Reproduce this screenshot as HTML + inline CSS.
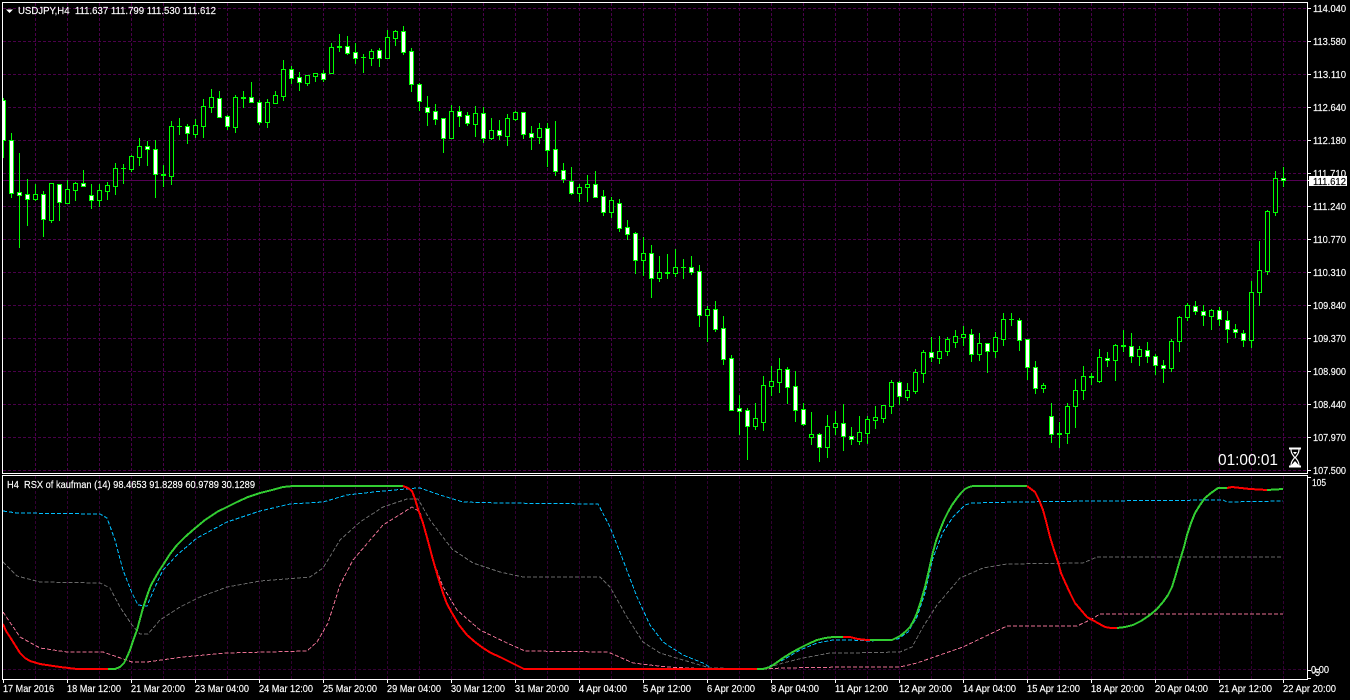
<!DOCTYPE html>
<html lang="en">
<head>
<meta charset="utf-8">
<title>USDJPY,H4</title>
<style>
html,body{margin:0;padding:0;background:#000;width:1350px;height:700px;overflow:hidden}
svg{display:block}
text{font-family:"Liberation Sans",sans-serif;font-size:10px;fill:#fff;stroke:#fff;stroke-width:.15;white-space:pre}
</style>
</head>
<body>
<svg width="1350" height="700" viewBox="0 0 1350 700" xmlns="http://www.w3.org/2000/svg">
<defs>
<clipPath id="main"><rect x="3" y="3" width="1304" height="470"/></clipPath>
</defs>
<rect width="1350" height="700" fill="#000"/>

<!-- grid main -->
<g shape-rendering="crispEdges" fill="none" stroke="#4a004a" stroke-width="1" stroke-dasharray="3 2">
<path d="M3 8.5H1307M3 41.5H1307M3 74.5H1307M3 107.5H1307M3 140.5H1307M3 173.5H1307M3 206.5H1307M3 239.5H1307M3 272.5H1307M3 305.5H1307M3 338.5H1307M3 371.5H1307M3 404.5H1307M3 437.5H1307M3 470.5H1307"/>
<path d="M35.5 3V473M67.5 3V473M99.5 3V473M131.5 3V473M163.5 3V473M195.5 3V473M227.5 3V473M259.5 3V473M291.5 3V473M323.5 3V473M355.5 3V473M387.5 3V473M419.5 3V473M451.5 3V473M483.5 3V473M515.5 3V473M547.5 3V473M579.5 3V473M611.5 3V473M643.5 3V473M675.5 3V473M707.5 3V473M739.5 3V473M771.5 3V473M803.5 3V473M835.5 3V473M867.5 3V473M899.5 3V473M931.5 3V473M963.5 3V473M995.5 3V473M1027.5 3V473M1059.5 3V473M1091.5 3V473M1123.5 3V473M1155.5 3V473M1187.5 3V473M1219.5 3V473M1251.5 3V473M1283.5 3V473"/>
<path stroke="#330033" d="M3 669.5H1307"/>
<path stroke="#330033" d="M35.5 476V679M67.5 476V679M99.5 476V679M131.5 476V679M163.5 476V679M195.5 476V679M227.5 476V679M259.5 476V679M291.5 476V679M323.5 476V679M355.5 476V679M387.5 476V679M419.5 476V679M451.5 476V679M483.5 476V679M515.5 476V679M547.5 476V679M579.5 476V679M611.5 476V679M643.5 476V679M675.5 476V679M707.5 476V679M739.5 476V679M771.5 476V679M803.5 476V679M835.5 476V679M867.5 476V679M899.5 476V679M931.5 476V679M963.5 476V679M995.5 476V679M1027.5 476V679M1059.5 476V679M1091.5 476V679M1123.5 476V679M1155.5 476V679M1187.5 476V679M1219.5 476V679M1251.5 476V679M1283.5 476V679"/>
</g>
<path d="M3 180.5H1307" stroke="#550055" stroke-width="1" shape-rendering="crispEdges"/>

<!-- candles -->
<g clip-path="url(#main)" shape-rendering="crispEdges" stroke="#00ff00" stroke-width="1">
<path fill="none" d="M3.5 98V158M11.5 133V198M19.5 153V248M27.5 179V226M35.5 184V201M43.5 191V237M51.5 183V223M59.5 184V221M67.5 180V204M75.5 182V201M83.5 170V186M91.5 184V209M99.5 184V207M107.5 182V200M115.5 163V195M123.5 164V184M131.5 155V172M139.5 138V166M147.5 141V166M155.5 140V198M163.5 165V187M171.5 121V185M179.5 118V135M187.5 124V144M195.5 119V138M203.5 99V138M211.5 89V113M219.5 91V117M227.5 115V130M235.5 95V133M243.5 91V108M251.5 82V102M259.5 100V125M267.5 99V128M275.5 91V104M283.5 60V101M291.5 66V84M299.5 72V91M307.5 75V86M315.5 73V82M323.5 70V82M331.5 43V73M339.5 34V52M347.5 36V55M355.5 43V64M363.5 54V73M371.5 49V66M379.5 48V67M387.5 30V59M395.5 30V46M403.5 26V55M411.5 48V92M419.5 83V111M427.5 96V126M435.5 104V125M443.5 118V153M451.5 105V139M459.5 106V127M467.5 112V126M475.5 106V137M483.5 107V143M491.5 118V140M499.5 120V140M507.5 114V146M515.5 111V121M523.5 112V139M531.5 126V150M539.5 123V144M547.5 123V167M555.5 121V176M563.5 163V183M571.5 167V195M579.5 184V202M587.5 175V202M595.5 171V198M603.5 190V216M611.5 197V218M619.5 199V232M627.5 220V240M635.5 232V274M643.5 237V276M651.5 245V298M659.5 256V282M667.5 254V279M675.5 249V277M683.5 259V279M691.5 256V275M699.5 265V327M707.5 306V342M715.5 301V332M723.5 316V365M731.5 355V410M739.5 395V435M747.5 408V460M755.5 403V430M763.5 376V431M771.5 366V396M779.5 358V393M787.5 367V404M795.5 371V422M803.5 403V426M811.5 412V445M819.5 433V462M827.5 415V458M835.5 411V435M843.5 404V451M851.5 427V445M859.5 416V445M867.5 416V444M875.5 406V429M883.5 405V423M891.5 380V414M899.5 381V405M907.5 383V401M915.5 369V394M923.5 350V383M931.5 337V362M939.5 336V364M947.5 337V356M955.5 330V348M963.5 326V346M971.5 329V362M979.5 333V361M987.5 343V373M995.5 332V358M1003.5 313V346M1011.5 313V326M1019.5 318V351M1027.5 339V380M1035.5 361V394M1043.5 383V393M1051.5 403V443M1059.5 422V448M1067.5 403V444M1075.5 379V428M1083.5 366V400M1091.5 373V385M1099.5 349V383M1107.5 352V367M1115.5 344V381M1123.5 330V352M1131.5 333V363M1139.5 346V366M1147.5 342V363M1155.5 354V375M1163.5 360V383M1171.5 339V372M1179.5 316V352M1187.5 303V321M1195.5 301V315M1203.5 305V326M1211.5 309V330M1219.5 307V326M1227.5 311V343M1235.5 324V338M1243.5 330V347M1251.5 281V348M1259.5 241V306M1267.5 210V275M1275.5 171V216M1283.5 167V187M121 168.5h5M177 126.5h5M361 57.5h5M681 267.5h5M1009 319.5h5"/>
<path fill="#000" d="M33.5 194.5h4v5h-4zM49.5 183.5h4v37h-4zM65.5 189.5h4v14h-4zM73.5 183.5h4v7h-4zM97.5 190.5h4v10h-4zM105.5 185.5h4v6h-4zM113.5 168.5h4v18h-4zM129.5 156.5h4v13h-4zM137.5 146.5h4v11h-4zM161.5 174.5h4v1h-4zM169.5 126.5h4v50h-4zM193.5 125.5h4v9h-4zM201.5 106.5h4v20h-4zM209.5 97.5h4v10h-4zM233.5 97.5h4v30h-4zM241.5 97.5h4v1h-4zM265.5 102.5h4v20h-4zM273.5 95.5h4v8h-4zM281.5 69.5h4v27h-4zM305.5 75.5h4v8h-4zM313.5 73.5h4v3h-4zM329.5 47.5h4v26h-4zM337.5 46.5h4v1h-4zM369.5 51.5h4v7h-4zM385.5 37.5h4v21h-4zM393.5 31.5h4v7h-4zM449.5 111.5h4v27h-4zM473.5 113.5h4v11h-4zM489.5 130.5h4v8h-4zM505.5 118.5h4v18h-4zM513.5 112.5h4v7h-4zM537.5 128.5h4v9h-4zM577.5 187.5h4v6h-4zM585.5 184.5h4v3h-4zM609.5 200.5h4v12h-4zM641.5 253.5h4v7h-4zM657.5 272.5h4v6h-4zM665.5 272.5h4v1h-4zM673.5 267.5h4v6h-4zM705.5 309.5h4v6h-4zM753.5 418.5h4v8h-4zM761.5 385.5h4v37h-4zM769.5 381.5h4v5h-4zM777.5 369.5h4v13h-4zM809.5 434.5h4v3h-4zM825.5 426.5h4v21h-4zM833.5 423.5h4v4h-4zM857.5 432.5h4v9h-4zM865.5 419.5h4v14h-4zM873.5 417.5h4v3h-4zM881.5 405.5h4v13h-4zM889.5 382.5h4v24h-4zM905.5 390.5h4v7h-4zM913.5 372.5h4v19h-4zM921.5 352.5h4v21h-4zM937.5 351.5h4v7h-4zM945.5 339.5h4v12h-4zM953.5 336.5h4v6h-4zM961.5 334.5h4v3h-4zM977.5 343.5h4v11h-4zM993.5 337.5h4v14h-4zM1001.5 319.5h4v20h-4zM1041.5 385.5h4v3h-4zM1057.5 433.5h4v1h-4zM1065.5 406.5h4v27h-4zM1073.5 390.5h4v16h-4zM1081.5 376.5h4v14h-4zM1089.5 376.5h4v1h-4zM1097.5 357.5h4v24h-4zM1113.5 345.5h4v15h-4zM1121.5 345.5h4v1h-4zM1137.5 349.5h4v7h-4zM1169.5 341.5h4v27h-4zM1177.5 317.5h4v24h-4zM1185.5 305.5h4v12h-4zM1209.5 310.5h4v6h-4zM1249.5 292.5h4v48h-4zM1257.5 270.5h4v22h-4zM1265.5 211.5h4v60h-4zM1273.5 178.5h4v34h-4z"/>
<path fill="#fff" d="M1.5 100.5h4v40h-4zM9.5 140.5h4v53h-4zM17.5 192.5h4v3h-4zM25.5 194.5h4v5h-4zM41.5 194.5h4v25h-4zM57.5 184.5h4v18h-4zM81.5 183.5h4v3h-4zM89.5 195.5h4v5h-4zM145.5 146.5h4v3h-4zM153.5 149.5h4v25h-4zM185.5 126.5h4v7h-4zM217.5 98.5h4v19h-4zM225.5 116.5h4v10h-4zM249.5 97.5h4v5h-4zM257.5 102.5h4v20h-4zM289.5 69.5h4v9h-4zM297.5 77.5h4v5h-4zM321.5 73.5h4v6h-4zM345.5 46.5h4v7h-4zM353.5 52.5h4v6h-4zM377.5 50.5h4v8h-4zM401.5 31.5h4v21h-4zM409.5 51.5h4v33h-4zM417.5 84.5h4v17h-4zM425.5 107.5h4v5h-4zM433.5 111.5h4v8h-4zM441.5 118.5h4v20h-4zM457.5 111.5h4v5h-4zM465.5 115.5h4v8h-4zM481.5 113.5h4v25h-4zM497.5 130.5h4v5h-4zM521.5 112.5h4v22h-4zM529.5 133.5h4v4h-4zM545.5 128.5h4v22h-4zM553.5 149.5h4v22h-4zM561.5 170.5h4v9h-4zM569.5 181.5h4v12h-4zM593.5 184.5h4v13h-4zM601.5 196.5h4v16h-4zM617.5 203.5h4v25h-4zM625.5 227.5h4v7h-4zM633.5 233.5h4v27h-4zM649.5 253.5h4v25h-4zM689.5 267.5h4v5h-4zM697.5 271.5h4v44h-4zM713.5 309.5h4v20h-4zM721.5 328.5h4v31h-4zM729.5 358.5h4v52h-4zM737.5 408.5h4v3h-4zM745.5 410.5h4v16h-4zM785.5 369.5h4v18h-4zM793.5 386.5h4v24h-4zM801.5 409.5h4v15h-4zM817.5 434.5h4v13h-4zM841.5 423.5h4v13h-4zM849.5 436.5h4v3h-4zM897.5 382.5h4v14h-4zM929.5 352.5h4v5h-4zM969.5 334.5h4v20h-4zM985.5 343.5h4v8h-4zM1017.5 320.5h4v20h-4zM1025.5 339.5h4v28h-4zM1033.5 367.5h4v21h-4zM1049.5 416.5h4v18h-4zM1105.5 358.5h4v2h-4zM1129.5 346.5h4v10h-4zM1145.5 350.5h4v6h-4zM1153.5 356.5h4v9h-4zM1161.5 365.5h4v3h-4zM1193.5 306.5h4v5h-4zM1201.5 311.5h4v4h-4zM1217.5 310.5h4v9h-4zM1225.5 320.5h4v9h-4zM1233.5 329.5h4v3h-4zM1241.5 333.5h4v7h-4zM1281.5 178.5h4v2h-4z"/>
</g>

<!-- indicator dashed lines -->
<g fill="none" stroke-width="1" stroke-dasharray="4 2" shape-rendering="crispEdges">
<polyline stroke="#00bfff" points="3,511 17,513 100,514 107,518 115,540 123,570 132,593 138,605 147,606 155,587 163,570 177,555 197,538 227,522 260,511 290,504 323,502 347,495 383,491 417,488 420,488 440,495 463,502 500,503 598,504 610,527 623,560 637,597 650,625 663,642 683,655 703,663 713,669 763,669 783,660 800,650 817,643 833,640 850,640 870,641 898,639 908,632 917,617 925,593 933,558 943,532 953,517 965,505 972,503 1017,502 1093,501 1223,500 1227,502 1283,501"/>
<polyline stroke="#696969" points="3,562 17,576 40,582 100,583 110,588 120,607 132,625 140,634 148,634 160,620 180,607 200,597 227,587 260,581 310,577 323,568 340,540 360,522 383,507 407,499 418,499 430,520 452,549 473,563 500,572 523,577 600,577 610,587 627,617 643,642 660,653 683,660 710,668 763,669 783,663 803,658 830,653 850,653 900,652 912,647 923,627 937,605 960,578 983,568 1007,564 1083,563 1097,557 1283,557"/>
<polyline stroke="#e97092" points="3,612 20,637 40,648 67,652 103,652 132,662 147,662 183,657 227,653 307,651 317,642 328,623 340,585 353,560 383,525 412,507 420,512 433,560 443,587 457,610 480,630 507,643 525,651 608,652 633,663 667,667 710,669 763,669 783,668 847,667 900,667 917,663 937,656 963,647 1007,626 1077,626 1090,620 1100,614 1283,614"/>
</g>

<!-- RSX main line -->
<g fill="none" stroke-width="2" stroke-linejoin="round" shape-rendering="crispEdges">
<polyline stroke="#ff0000" points="3,624 6,631 10,637 15,645 20,653 25,658 30,661 40,664 60,667 77,669 108,669"/>
<polyline stroke="#32cd32" points="108,669 115,669 120,667 124,663 127,657 130,650 133,641 137,630 140,619 143,608 148,593 151,585 155,578 159,571 163,565 170,554 177,545 185,537 193,530 205,520 217,512 227,507 237,502 248,497 260,493 272,490 283,487 293,486 403,486"/>
<polyline stroke="#ff0000" points="403,486 408,488 412,491 415,499 418,509 423,523 428,541 433,560 438,577 443,593 447,604 452,613 459,625 467,635 475,642 483,648 491,653 500,657 512,663 524,669 757,669"/>
<polyline stroke="#32cd32" points="757,669 763,669 770,667 776,663 783,658 791,653 800,648 808,644 817,640 825,638 833,637 843,637"/>
<polyline stroke="#ff0000" points="843,637 850,637 858,639 867,640 870,640"/>
<polyline stroke="#32cd32" points="870,640 892,640 896,638 900,636 905,632 910,627 914,620 917,613 921,601 925,587 929,570 933,552 936,541 940,530 944,520 948,512 952,505 957,498 961,493 965,489 969,487 973,486 1027,486"/>
<polyline stroke="#ff0000" points="1027,486 1031,489 1035,492 1039,500 1043,510 1046,521 1050,537 1054,550 1058,562 1061,573 1065,582 1070,593 1075,603 1081,610 1087,617 1096,622 1105,627 1111,628 1117,628"/>
<polyline stroke="#32cd32" points="1117,628 1125,627 1133,625 1141,621 1150,615 1157,609 1163,602 1168,595 1172,587 1176,574 1180,560 1184,547 1187,535 1191,523 1195,513 1200,505 1205,498 1211,493 1218,488 1227,488"/>
<polyline stroke="#ff0000" points="1227,488 1232,487 1250,489 1267,490"/>
<polyline stroke="#32cd32" points="1267,490 1283,489"/>
</g>

<!-- frames and ticks -->
<g shape-rendering="crispEdges" fill="none" stroke="#fff" stroke-width="1">
<path d="M2.5 2.5H1307.5V473.5H2.5Z"/>
<path d="M2.5 475.5H1307.5V679.5H2.5Z"/>
<path d="M1308 8.5h3M1308 41.5h3M1308 74.5h3M1308 107.5h3M1308 140.5h3M1308 173.5h3M1308 206.5h3M1308 239.5h3M1308 272.5h3M1308 305.5h3M1308 338.5h3M1308 371.5h3M1308 404.5h3M1308 437.5h3M1308 470.5h3"/>
<path d="M1308 477.5h3M1308 670.5h3M1308 678.5h3"/>
<path d="M3.5 680v3M67.5 680v3M131.5 680v3M195.5 680v3M259.5 680v3M323.5 680v3M387.5 680v3M451.5 680v3M515.5 680v3M579.5 680v3M643.5 680v3M707.5 680v3M771.5 680v3M835.5 680v3M899.5 680v3M963.5 680v3M1027.5 680v3M1091.5 680v3M1155.5 680v3M1219.5 680v3M1283.5 680v3"/>
</g>

<!-- header -->
<path d="M6 9.5h7l-3.5 3.5z" fill="#fff"/>
<text x="18" y="14" textLength="198" lengthAdjust="spacingAndGlyphs" xml:space="preserve">USDJPY,H4  111.637 111.799 111.530 111.612</text>
<text x="7" y="488" textLength="248" lengthAdjust="spacingAndGlyphs" xml:space="preserve">H4  RSX of kaufman (14) 98.4653 91.8289 60.9789 30.1289</text>

<!-- price axis -->
<g>
<text x="1313" y="12" textLength="33" lengthAdjust="spacingAndGlyphs">114.040</text>
<text x="1313" y="45" textLength="33" lengthAdjust="spacingAndGlyphs">113.580</text>
<text x="1313" y="78" textLength="33" lengthAdjust="spacingAndGlyphs">113.110</text>
<text x="1313" y="111" textLength="33" lengthAdjust="spacingAndGlyphs">112.640</text>
<text x="1313" y="144" textLength="33" lengthAdjust="spacingAndGlyphs">112.180</text>
<text x="1313" y="177" textLength="33" lengthAdjust="spacingAndGlyphs">111.710</text>
<text x="1313" y="210" textLength="33" lengthAdjust="spacingAndGlyphs">111.240</text>
<text x="1313" y="243" textLength="33" lengthAdjust="spacingAndGlyphs">110.770</text>
<text x="1313" y="276" textLength="33" lengthAdjust="spacingAndGlyphs">110.310</text>
<text x="1313" y="309" textLength="33" lengthAdjust="spacingAndGlyphs">109.840</text>
<text x="1313" y="342" textLength="33" lengthAdjust="spacingAndGlyphs">109.370</text>
<text x="1313" y="375" textLength="33" lengthAdjust="spacingAndGlyphs">108.900</text>
<text x="1313" y="408" textLength="33" lengthAdjust="spacingAndGlyphs">108.440</text>
<text x="1313" y="441" textLength="33" lengthAdjust="spacingAndGlyphs">107.970</text>
<text x="1313" y="474" textLength="33" lengthAdjust="spacingAndGlyphs">107.500</text>
</g>
<rect x="1309" y="176" width="38" height="10" fill="#fff" shape-rendering="crispEdges"/>
<path d="M1307 180.5h2" stroke="#fff" shape-rendering="crispEdges"/>
<text x="1313" y="185" textLength="33" lengthAdjust="spacingAndGlyphs" style="fill:#000;stroke:#000">111.612</text>

<!-- indicator axis -->
<text x="1312" y="486" textLength="14" lengthAdjust="spacingAndGlyphs">105</text>
<text x="1311" y="673" textLength="18" lengthAdjust="spacingAndGlyphs">0.00</text>
<text x="1312" y="676" textLength="8" lengthAdjust="spacingAndGlyphs">-5</text>

<!-- countdown -->
<text x="1218" y="465" textLength="60" lengthAdjust="spacingAndGlyphs" style="font-size:16px;stroke-width:0">01:00:01</text>
<g>
<path d="M1289 448.5h12M1289 466.5h12" stroke="#fff" stroke-width="1.6" fill="none" shape-rendering="crispEdges"/>
<path d="M1291 449.5c0 5 3 6 3.500 8c-.5 2-3.500 3-3.500 8M1299 449.500c0 5-3 6-3.500 8c.5 2 3.500 3 3.500 8" stroke="#fff" stroke-width="1.200" fill="none"/>
<path d="M1291 465.500l4-4.500l4 4.500z" fill="#fff"/>
<path d="M1293 452h4l-2 2.500z" fill="#fff"/>
</g>

<!-- time axis -->
<g>
<text x="3" y="692" textLength="51" lengthAdjust="spacingAndGlyphs">17 Mar 2016</text>
<text x="67" y="692" textLength="54" lengthAdjust="spacingAndGlyphs">18 Mar 12:00</text>
<text x="131" y="692" textLength="54" lengthAdjust="spacingAndGlyphs">21 Mar 20:00</text>
<text x="195" y="692" textLength="54" lengthAdjust="spacingAndGlyphs">23 Mar 04:00</text>
<text x="259" y="692" textLength="54" lengthAdjust="spacingAndGlyphs">24 Mar 12:00</text>
<text x="323" y="692" textLength="54" lengthAdjust="spacingAndGlyphs">25 Mar 20:00</text>
<text x="387" y="692" textLength="54" lengthAdjust="spacingAndGlyphs">29 Mar 04:00</text>
<text x="451" y="692" textLength="54" lengthAdjust="spacingAndGlyphs">30 Mar 12:00</text>
<text x="515" y="692" textLength="54" lengthAdjust="spacingAndGlyphs">31 Mar 20:00</text>
<text x="579" y="692" textLength="48" lengthAdjust="spacingAndGlyphs">4 Apr 04:00</text>
<text x="643" y="692" textLength="48" lengthAdjust="spacingAndGlyphs">5 Apr 12:00</text>
<text x="707" y="692" textLength="48" lengthAdjust="spacingAndGlyphs">6 Apr 20:00</text>
<text x="771" y="692" textLength="48" lengthAdjust="spacingAndGlyphs">8 Apr 04:00</text>
<text x="835" y="692" textLength="53" lengthAdjust="spacingAndGlyphs">11 Apr 12:00</text>
<text x="899" y="692" textLength="53" lengthAdjust="spacingAndGlyphs">12 Apr 20:00</text>
<text x="963" y="692" textLength="53" lengthAdjust="spacingAndGlyphs">14 Apr 04:00</text>
<text x="1027" y="692" textLength="53" lengthAdjust="spacingAndGlyphs">15 Apr 12:00</text>
<text x="1091" y="692" textLength="53" lengthAdjust="spacingAndGlyphs">18 Apr 20:00</text>
<text x="1155" y="692" textLength="53" lengthAdjust="spacingAndGlyphs">20 Apr 04:00</text>
<text x="1219" y="692" textLength="53" lengthAdjust="spacingAndGlyphs">21 Apr 12:00</text>
<text x="1283" y="692" textLength="53" lengthAdjust="spacingAndGlyphs">22 Apr 20:00</text>
</g>
</svg>
</body>
</html>
